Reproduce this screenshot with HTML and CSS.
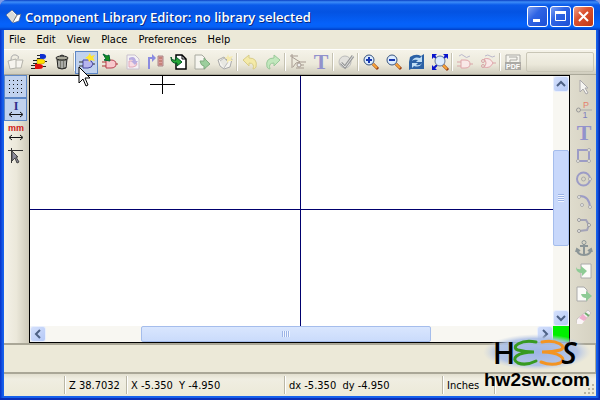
FILE: index.html
```html
<!DOCTYPE html>
<html lang="en">
<head>
  <meta charset="UTF-8">
  <meta name="viewport" content="width=device-width, initial-scale=1.0">
  <title>Component Library Editor</title>
  <link rel="stylesheet" href="styles.css">
</head>
<body>
  <div class="window">
    <header class="titlebar">
      <svg class="app-icon" width="16" height="16" viewBox="0 0 16 16"><path d="M0 6 6 1l5 5 4-1-2 7-6 2z" fill="#fff" stroke="#4a5a80" stroke-width=".7"/><path d="M1 6 6 2l5 6-5 5z" fill="#dcdcd8"/><path d="m7 13 4-7" stroke="#777"/></svg>
      <h1>Component Library Editor: no library selected</h1>
      <div class="win-buttons">
        <button class="win-btn" aria-label="Minimize"><svg width="19" height="19"><path d="M5 13.5h7" stroke="#fff" stroke-width="3"/></svg></button>
        <button class="win-btn" aria-label="Maximize"><svg width="19" height="19"><path d="M4.500 5.500h10v8h-10z" fill="none" stroke="#fff"/><path d="M4 5.500h11" stroke="#fff" stroke-width="3"/></svg></button>
        <button class="win-btn close" aria-label="Close"><svg width="19" height="19"><path d="m5 5 9 9m0-9-9 9" stroke="#fff" stroke-width="2"/></svg></button>
      </div>
    </header>

    <nav class="menubar">
      <button>File</button>
      <button>Edit</button>
      <button>View</button>
      <button>Place</button>
      <button>Preferences</button>
      <button>Help</button>
    </nav>

    <div class="toolbar">
      <button class="tool" aria-label="Save library" disabled><svg viewBox="0 0 16 16"><path d="M0 7 8 5v9l-6 1zM8 6h7l-2 8H8" fill="#f6f4ee" stroke="#b3b2aa"/><path d="M3 6q0-6 5-5 4 1 2 4" fill="none" stroke="#aaa"/></svg></button>
      <button class="tool" aria-label="Select library"><svg viewBox="0 0 16 16"><path d="M9 0h3q3 0 3 2.500T12 5H9z" fill="#1030d0"/><path d="M6 5h4q4 0 4 2.500T10 10H6z" fill="#ffe000" stroke="#aa8800" stroke-width=".5"/><path d="M4 10h4q4 0 4 2.500T8 15H4z" fill="#e01010"/><path d="M6 1.500h3M6 4.500h3M2 6.500h4M2 9.500h4M0 11.500h4M0 14.500h4M12 12.500h3M14 7.500h2" stroke="#222"/></svg></button>
      <button class="tool" aria-label="Delete component"><svg viewBox="0 0 16 16"><path d="M3 5h10l-1 9q-4 2-8 0z" fill="#77786e" stroke="#222"/><ellipse cx="8" cy="4" rx="6" ry="2" fill="#aaa99a" stroke="#222"/><path d="M6 2q2-2 4 0" fill="none" stroke="#222"/><path d="M5 7v6M8 7v7M11 7v6" stroke="#ddd"/></svg></button>
      <span class="sep"></span>
      <button class="tool active" aria-label="New component"><svg viewBox="0 0 16 16"><path d="M4 6h5q4 0 5 4-1 4-5 4H4z" fill="#b6b5ef" stroke="#4545a0"/><path d="M0 8h4M0 12h4M14 10h2" stroke="#333"/><path d="m11-1 1 3 4-1-2 3 2 3-4-1-2 2-1-3-3-1 3-2z" fill="#ffe52e"/></svg></button>
      <button class="tool" aria-label="Load component"><svg viewBox="0 0 16 16"><path d="M4 6h5q5 0 5 4t-5 4H4z" fill="#f8c8cc" stroke="#b84050"/><path d="M0 8h4M0 12h4M14 10h2" stroke="#a33"/><path d="m1 0 4 2 2-1 1 6-6-1 2-1z" fill="#159020" stroke="#063"/></svg></button>
      <button class="tool" aria-label="Component from current" disabled><svg viewBox="0 0 16 16"><path d="M2 1h8l4 4v10H2z" fill="#f4f2f4" stroke="#c9c0cd"/><path d="M4 7h4q4 1 4 3t-4 3H4z" fill="#f8dce4" stroke="#e0a8b8"/><path d="M4 4q6-3 7 3h2l-3 4-4-4h2q0-2-4-1z" fill="#b9ace0"/></svg></button>
      <button class="tool" aria-label="Update component" disabled><svg viewBox="0 0 16 16"><path d="M1 15V4h4" fill="none" stroke="#8b8ce0" stroke-width="2"/><path d="m4 0 4 4-4 4z" fill="#8b8ce0"/><path d="M10 2h5v10h-5z" fill="#e0a0a0" stroke="#a88"/><path d="M11 4h3m-3 3h3m-3 3h3" stroke="#a65"/></svg></button>
      <button class="tool" aria-label="Import component"><svg viewBox="0 0 16 16"><path d="M5 1h6l4 4v10H5z" fill="#fff" stroke="#000" stroke-width="1.500"/><path d="M11 1v4h4" fill="none" stroke="#000"/><path d="M0 3q1 4 5 3V3l6 5-5 4v-3Q0 10 0 3z" fill="#28a838" stroke="#052"/></svg></button>
      <button class="tool" aria-label="Export component" disabled><svg viewBox="0 0 16 16"><path d="M1 1h7l3 3v11H1z" fill="#f6f5ef" stroke="#a8aaa0"/><path d="M6 7h4V4l6 6-6 5v-3Q7 12 6 7z" fill="#9cce9d" stroke="#80ab80"/></svg></button>
      <button class="tool" aria-label="New library" disabled><svg viewBox="0 0 16 16"><path d="m1 6 6-3 3 3 5-1-2 8-6 2-4-3z" fill="#f5f4ef" stroke="#aaa"/><path d="M3 7 7 4l4 4-4 6" fill="#e8e8e2" stroke="#bbb"/><path d="m11 0 1 3 4-1-2 3 2 2-4 0-2 2V5L7 4l3-1z" fill="#f5eab0"/></svg></button>
      <span class="sep"></span>
      <button class="tool" aria-label="Undo" disabled><svg viewBox="0 0 16 16"><path d="m1 6 6-5v3q9 0 7 9-1 2-3 2 2-6-4-6v3z" fill="#f4eaa8" stroke="#d8cc88"/></svg></button>
      <button class="tool" aria-label="Redo" disabled><svg viewBox="0 0 16 16"><path d="M15 6 9 1v3Q0 4 2 13q1 2 3 2-2-6 4-6v3z" fill="#c2e8bd" stroke="#9ac99a"/></svg></button>
      <span class="sep"></span>
      <button class="tool" aria-label="Edit properties" disabled><svg viewBox="0 0 16 16"><path d="M0 2h8M2 0v14M2 3l8 5-4 1-3 4" fill="none" stroke="#a79b91"/><path d="M9 8h7M9 11h5M6 14h8" stroke="#a79b91"/><circle cx="9" cy="11" r="2" fill="#eee" stroke="#a79b91"/></svg></button>
      <button class="tool" aria-label="Text" disabled><svg viewBox="0 0 16 16"><text x="8" y="15" class="icon-t">T</text></svg></button>
      <span class="sep"></span>
      <button class="tool" aria-label="Check pins" disabled><svg viewBox="0 0 16 16"><circle cx="7" cy="8" r="6" fill="#e2e1dd" stroke="#bbb"/><path d="m3 9 4 4 8-11" fill="none" stroke="#999a9a" stroke-width="3"/><path d="m3 9 4 4 8-11" fill="none" stroke="#ddd"/></svg></button>
      <span class="sep"></span>
      <button class="tool" aria-label="Zoom in"><svg viewBox="0 0 16 16"><path d="m10 10 5 5" stroke="#963c14" stroke-width="3"/><path d="m10 10 4 4" stroke="#f8a638" stroke-width="2"/><circle cx="6" cy="6" r="5" fill="#dcecff" stroke="#39547c"/><path d="M3 6h6M6 3v6" stroke="#1838b0" stroke-width="2"/></svg></button>
      <button class="tool" aria-label="Zoom out"><svg viewBox="0 0 16 16"><path d="m10 10 5 5" stroke="#963c14" stroke-width="3"/><path d="m10 10 4 4" stroke="#f8a638" stroke-width="2"/><circle cx="6" cy="6" r="5" fill="#dcecff" stroke="#39547c"/><path d="M3 6h6" stroke="#1838b0" stroke-width="2"/></svg></button>
      <button class="tool" aria-label="Redraw"><svg viewBox="0 0 16 16"><path d="M1 3q6-4 11-1l3-2v15H2L0 16V8z" fill="#2b61a5"/><path d="M3 7q2-5 8-3l2-2v6H7l2-2Q5 5 3 7zM13 9q-2 5-8 3l-2 2V9h6l-2 2q4 1 6-2z" fill="#c0def5"/></svg></button>
      <button class="tool" aria-label="Zoom auto"><svg viewBox="0 0 16 16"><path d="M0 0h5L0 5zM16 0h-5l5 5zM0 16h5l-5-5z" fill="#0b16cc"/><path d="m1 1 4 4m10-4-4 4M1 15l4-4" stroke="#0b16cc" stroke-width="2"/><path d="m11 11 5 5" stroke="#963c14" stroke-width="3"/><path d="m11 11 4 4" stroke="#f8a638" stroke-width="2"/><circle cx="8" cy="7" r="5" fill="#dcecff" stroke="#65799a"/></svg></button>
      <span class="sep"></span>
      <button class="tool" aria-label="Normal body style" disabled><svg viewBox="0 0 16 16"><path d="M4 6h4q5 0 5 4t-5 4H4z" fill="#f9e9e8" stroke="#e0a5aa"/><path d="M0 8h4M0 12h4M13 10h3" stroke="#d8a5a8"/><path d="M2 2q3-3 5 0t6 0" fill="none" stroke="#bbb8cc"/></svg></button>
      <button class="tool" aria-label="Alternate body style" disabled><svg viewBox="0 0 16 16"><path d="M4 5q6-2 9 4-3 6-9 4 4-4 0-8z" fill="#f9e9e8" stroke="#e0a5aa"/><circle cx="3" cy="7" r="1.500" fill="none" stroke="#d8a5a8"/><circle cx="3" cy="12" r="1.500" fill="none" stroke="#d8a5a8"/><path d="M13 9h3" stroke="#d8a5a8"/><path d="M5 2q3-2 5 0t5 0" fill="none" stroke="#bbb8cc"/></svg></button>
      <span class="sep"></span>
      <button class="tool" aria-label="Documentation" disabled><svg viewBox="0 0 16 16"><path d="M1 8V1h14v7" fill="#f5f4ee" stroke="#aaa9a4"/><path d="M4 3h8v3H5v2" fill="none" stroke="#aaa9a4"/><rect x="0" y="8" width="16" height="8" fill="#aaa9a4"/><text x="8" y="15" class="icon-pdf">PDF</text></svg></button>
      <span class="toolbar-end"></span>
    </div>

    <main class="workspace">
      <div class="side left">
        <button class="tool active" aria-label="Show grid"><svg viewBox="0 0 16 16"><path d="M1 1.500h14M1 5.500h14M1 9.500h14M1 13.500h14" stroke="#111" stroke-dasharray="1 3"/></svg></button>
        <button class="tool active" aria-label="Units in inches"><svg viewBox="0 0 16 16"><text x="8" y="8" class="icon-i">I</text><path d="M2 12.500h12M4 10l-3 2.500L4 15M12 10l3 2.500L12 15" fill="none" stroke="#111"/></svg></button>
        <button class="tool" aria-label="Units in millimeters"><svg viewBox="0 0 16 16"><text x="8" y="6" class="icon-mm">mm</text><path d="M2 12.500h12M4 10l-3 2.500L4 15M12 10l3 2.500L12 15" fill="none" stroke="#111"/></svg></button>
        <button class="tool" aria-label="Cursor shape"><svg viewBox="0 0 16 16"><path d="M0 2.500h15M3.500 0v15" stroke="#333"/><path d="m4 3 6 6H8l3 5-2 1-2-5-3 3z" fill="#8b8a99" stroke="#444"/></svg></button>
      </div>

      <div class="editor">
        <div class="canvas">
          <svg class="axes"><path d="M270.500 0v2000M0 133.500h2000" stroke="#00006e"/></svg>
          <svg class="crosshair" width="25" height="18"><path d="M0 8.500h25M12.500 0v18" stroke="#000"/></svg>
        </div>
        <div class="scroll vertical">
          <button class="scroll-btn" aria-label="Scroll up"><svg viewBox="0 0 10 10"><path d="m1 7 4-4 4 4"/></svg></button>
          <span class="track before"></span>
          <span class="thumb"></span>
          <span class="track after"></span>
          <button class="scroll-btn" aria-label="Scroll down"><svg viewBox="0 0 10 10"><path d="m1 3 4 4 4-4"/></svg></button>
        </div>
        <div class="scroll horizontal">
          <button class="scroll-btn" aria-label="Scroll left"><svg viewBox="0 0 10 10"><path d="M7 1 3 5l4 4"/></svg></button>
          <span class="track before"></span>
          <span class="thumb"></span>
          <span class="track after"></span>
          <button class="scroll-btn" aria-label="Scroll right"><svg viewBox="0 0 10 10"><path d="m3 1 4 4-4 4"/></svg></button>
        </div>
        <div class="corner"></div>
      </div>

      <div class="side right">
        <button class="tool" aria-label="Select" disabled><svg viewBox="0 0 16 16"><path d="m4 1 8 8H9l3 5-2 1-3-5-3 3z" fill="#f6f5f1" stroke="#aaa8aa"/></svg></button>
        <button class="tool" aria-label="Add pin" disabled><svg viewBox="0 0 16 16"><circle cx="2.500" cy="8" r="2" fill="none" stroke="#999"/><path d="M5 8h11" stroke="#aaa"/><text x="10" y="6" class="icon-pin">P</text><text x="9" y="16" class="icon-pin blue">1</text></svg></button>
        <button class="tool" aria-label="Add text" disabled><svg viewBox="0 0 16 16"><text x="8" y="15" class="icon-t">T</text></svg></button>
        <button class="tool" aria-label="Add rectangle" disabled><svg viewBox="0 0 16 16"><path d="M2 2h11v11H2z" fill="none" stroke="#9c9cc6" stroke-width="2"/><circle cx="2" cy="13" r="1.500" fill="#eee" stroke="#aaa"/><circle cx="13" cy="2" r="1.500" fill="#eee" stroke="#aaa"/><circle cx="13" cy="13" r="1.500" fill="#eee" stroke="#aaa"/></svg></button>
        <button class="tool" aria-label="Add circle" disabled><svg viewBox="0 0 16 16"><circle cx="7.500" cy="8" r="6.500" fill="none" stroke="#9c9cc6" stroke-width="2"/><circle cx="7.500" cy="8" r="2" fill="none" stroke="#aaa"/><circle cx="14" cy="8" r="1.500" fill="#eee" stroke="#aaa"/></svg></button>
        <button class="tool" aria-label="Add arc" disabled><svg viewBox="0 0 16 16"><path d="M4 2q9 0 10 11" fill="none" stroke="#9c9cc6" stroke-width="2"/><circle cx="3" cy="3" r="1.500" fill="#eee" stroke="#aaa"/><circle cx="6" cy="11" r="1.500" fill="#eee" stroke="#aaa"/><circle cx="14" cy="13" r="1.500" fill="#eee" stroke="#aaa"/></svg></button>
        <button class="tool" aria-label="Add polygon" disabled><svg viewBox="0 0 16 16"><path d="m3 3 7 0 3 5-2 5-8 1" fill="none" stroke="#a3a3b8" stroke-width="2"/><circle cx="3" cy="3" r="1.500" fill="#eee" stroke="#999"/><circle cx="13" cy="8" r="1.500" fill="#eee" stroke="#999"/><circle cx="3" cy="14" r="1.500" fill="#eee" stroke="#999"/></svg></button>
        <button class="tool" aria-label="Set anchor" disabled><svg viewBox="0 0 16 16"><circle cx="8" cy="2.500" r="2" fill="none" stroke="#8b9597"/><path d="M8 4v11M4 6h8M1 10q1 5 7 5t7-5M0 12l1-3 3 2m12 1-1-3-3 2" fill="none" stroke="#8b9597" stroke-width="2"/></svg></button>
        <button class="tool" aria-label="Import drawing" disabled><svg viewBox="0 0 16 16"><path d="M5 1h10v14H5z" fill="#fbfbf8" stroke="#aaa"/><path d="M0 4q1 3 5 2V3l6 5-5 5v-3Q0 10 0 4z" fill="#8ecb95"/></svg></button>
        <button class="tool" aria-label="Export drawing" disabled><svg viewBox="0 0 16 16"><path d="M1 1h7l3 3v11H1z" fill="#fbfbf8" stroke="#aaa"/><path d="M5 8h5V5l6 5-6 5v-3Q6 12 5 8z" fill="#8ecb95"/></svg></button>
        <button class="tool" aria-label="Delete item" disabled><svg viewBox="0 0 16 16"><path d="m1 10 11-9 3 3-9 10H1z" fill="#f4f0f0" stroke="#c8c3c0"/><path d="m5 7 4 4-3 4H1v-4z" fill="#fbf6f8"/><path d="m7 5 4 4-3 3-5-3z" fill="#efb0cc"/><path d="m9 4 4 3" stroke="#70ad70" stroke-width="2"/></svg></button>
      </div>
    </main>

    <div class="message-panel"></div>

    <footer class="statusbar">
      <span class="cell message"></span>
      <span class="cell zoom">Z 38.7032</span>
      <span class="cell position">X -5.350&nbsp; Y -4.950</span>
      <span class="cell delta">dx -5.350&nbsp; dy -4.950</span>
      <span class="cell units">Inches</span>
      <span class="cell last"></span>
      <svg class="grip" width="12" height="12"><path d="M8 1h2M4 5h2m2 0h2M0 9h2m2 0h2m2 0h2" stroke="#b8b4a2" stroke-width="2"/></svg>
    </footer>

    <svg class="pointer" width="13" height="21" viewBox="0 0 13 21"><path d="M1 1v16l4-4 3 7 2-1-3-7h5z" fill="#fff" stroke="#000"/></svg>

    <div class="brand">
      <svg class="brand-mark" width="108" height="36" viewBox="0 0 108 36">
        <defs>
          <radialGradient id="glow"><stop offset="0" stop-color="#9eb5e6"/><stop offset=".75" stop-color="#adc0e7" stop-opacity=".9"/><stop offset="1" stop-color="#cbd4e2" stop-opacity="0"/></radialGradient>
        </defs>
        <ellipse cx="54" cy="18" rx="54" ry="18" fill="url(#glow)"/>
        <text x="21" y="30" class="brand-letter">H</text>
        <g fill="none" stroke-width="3" stroke-linecap="round">
          <path d="M53 8C38 5 27 13 35 16Q42 18 51 18C34 18 27 25 35 29Q43 32 53 27" stroke="#379a20"/>
          <path d="M59 8C74 5 85 13 77 16Q70 18 59 18C76 18 85 25 77 29Q68 32 58 28" stroke="#f39422"/>
        </g>
        <text x="86" y="30" class="brand-letter slanted">S</text>
      </svg>
      <span class="brand-name">hw2sw.com</span>
    </div>
  </div>
</body>
</html>
```
FILE: styles.css
```css
* {
  box-sizing: border-box;
}
body {
  margin: 0;
  background-color: #7d9be8;
  font-family: "DejaVu Sans Condensed", "DejaVu Sans", sans-serif;
  font-size: 11px;
  color: #000;
}
button {
  margin: 0;
  padding: 0;
  border: none;
  background: none;
  font: inherit;
  color: inherit;
}
svg {
  display: block;
}
.window {
  position: relative;
  display: flex;
  flex-direction: column;
  height: 100vh;
  padding: 0 4px 4px;
  background: linear-gradient(to right, #0831c9, #1660ec 3px, #1660ec calc(100% - 3px), #001ea0);
  box-shadow: inset 0 -2px #0a2fb8;
  border-radius: 7px 7px 0 0;
  overflow: hidden;
}

/* title bar */
.titlebar {
  display: flex;
  align-items: center;
  flex: none;
  height: 30px;
  margin: 0 -4px;
  padding: 3px 6px 0;
  background: linear-gradient(#0a3fc4, #3d8df8 2px, #0a5bea 5px, #0453e2 12px, #0562fb 24px, #0561f5 27px, #003dc5);
}
.app-icon {
  margin-right: 3px;
}
.titlebar h1 {
  flex: 1;
  margin: 0;
  font-family: "Open Sans", sans-serif;
  font-size: 13px;
  font-weight: 600;
  color: #fff;
  text-shadow: 1px 1px #0a2a80;
  white-space: nowrap;
}
.win-buttons {
  display: flex;
  gap: 2px;
}
.win-btn {
  width: 21px;
  height: 21px;
  border: 1px solid #fff;
  border-radius: 3px;
  background: linear-gradient(135deg, #7da0f3, #2f64e4 40%, #1c50d6);
}
.win-btn.close {
  background: linear-gradient(135deg, #f0a088, #dc5231 40%, #bf3714);
}

/* menu */
.menubar {
  display: flex;
  gap: 11px;
  flex: none;
  height: 19px;
  padding-left: 5px;
  background-color: #ece9d8;
}
.menubar button {
  line-height: 18px;
}

/* tool bars */
.toolbar {
  display: flex;
  align-items: center;
  flex: none;
  height: 26px;
  border-top: 1px solid #fff;
  border-bottom: 1px solid #aaa899;
  background: linear-gradient(#f5f3e9, #ebe8da 60%, #cfccbd);
}
.tool {
  display: flex;
  align-items: center;
  justify-content: center;
  flex: none;
  width: 23px;
  height: 23px;
  border: 1px solid transparent;
}
.tool svg {
  width: 16px;
  height: 16px;
  overflow: visible;
}
.tool.active {
  border-color: #5c86c5;
  background-color: #c1d2ee;
}
.sep {
  width: 2px;
  height: 18px;
  border-left: 1px solid #c5c2b2;
  border-right: 1px solid #fff;
}
.toolbar-end {
  flex: 1;
  height: 20px;
  margin: 0 2px;
  border: 1px solid #c9c6b6;
  border-radius: 2px;
}
.icon-t,
.icon-i,
.icon-mm,
.icon-pin,
.icon-pdf {
  font-weight: bold;
  text-anchor: middle;
}
.icon-t {
  font-family: "Liberation Serif", serif;
  font-size: 22px;
  fill: #9292cc;
}
.icon-i {
  font-family: "Liberation Serif", serif;
  font-size: 12px;
  fill: #30308c;
}
.icon-mm {
  font-family: "Liberation Sans", sans-serif;
  font-size: 9px;
  fill: #d01818;
}
.icon-pin {
  font-family: "Liberation Sans", sans-serif;
  font-size: 9px;
  font-weight: normal;
  fill: #e4806c;
}
.icon-pin.blue {
  fill: #8080bf;
}
.icon-pdf {
  font-family: "Liberation Sans", sans-serif;
  font-size: 7px;
  fill: #fff;
}

/* drawing area */
.workspace {
  display: flex;
  flex: 1;
  min-height: 0;
  background-color: #d8d4c4;
}
.side {
  display: flex;
  flex-direction: column;
  flex: none;
  width: 25px;
  background: linear-gradient(to right, #f4f2e8, #ebe8da 50%, #cdc9b9);
}
.side.right {
  width: 26px;
  padding-left: 2px;
  background: linear-gradient(to right, #dfdccd, #d5d1c1);
}
.editor {
  display: grid;
  grid-template-columns: 1fr 16px;
  grid-template-rows: 1fr 16px;
  flex: 1;
  min-width: 0;
  border: 1px solid #000;
}
.canvas {
  position: relative;
  background-color: #fff;
  overflow: hidden;
}
.axes {
  width: 100%;
  height: 100%;
}
.crosshair {
  position: absolute;
  left: 120px;
  top: 0;
}
.scroll {
  display: flex;
  min-width: 0;
  min-height: 0;
  background-color: #f8f7f2;
}
.vertical {
  flex-direction: column;
}
.scroll-btn {
  display: flex;
  align-items: center;
  justify-content: center;
  flex: none;
  width: 16px;
  height: 16px;
  border: 1px solid #e9effd;
  border-radius: 3px;
  background: linear-gradient(135deg, #d4e0fc, #b4c8f6);
}
.scroll-btn svg {
  width: 10px;
  height: 10px;
  fill: none;
  stroke: #4d6185;
  stroke-width: 2px;
}
.thumb {
  display: flex;
  align-items: center;
  justify-content: center;
  border: 1px solid #a5bdec;
  border-radius: 2px;
  background-color: #c8d8fb;
}
.horizontal .thumb {
  flex: 290;
  background: linear-gradient(#d9e6fe, #cadbfb);
}
.horizontal .before {
  flex: 95;
}
.horizontal .after {
  flex: 106;
}
.vertical .thumb {
  flex: 94;
}
.vertical .before {
  flex: 59;
}
.vertical .after {
  flex: 65;
}
.thumb::before {
  content: "";
  width: 8px;
  height: 6px;
  background: repeating-linear-gradient(to right, #9bb3e6 0 1px, #f0f5ff 1px 2px);
}
.vertical .thumb::before {
  width: 6px;
  height: 8px;
  background: repeating-linear-gradient(#9bb3e6 0 1px, #f0f5ff 1px 2px);
}
.corner {
  background-color: #00f000;
}

/* bottom panels */
.message-panel {
  flex: none;
  height: 31px;
  border: 1px solid #aaa797;
  border-width: 2px 1px 2px 0;
  background-color: #ece9d8;
}
.statusbar {
  display: flex;
  align-items: center;
  flex: none;
  height: 22px;
  background: linear-gradient(#e2dfcf, #f0eee2 5px, #ece9d8);
}
.cell {
  min-width: 0;
  height: 18px;
  padding-left: 4px;
  border-left: 1px solid #bab7a6;
  box-shadow: inset 1px 0 #fff;
  line-height: 20px;
  white-space: nowrap;
}
.cell.message {
  flex: 60 1 60px;
  border: none;
  box-shadow: none;
}
.cell.zoom {
  flex: 62 1 62px;
}
.cell.position,
.cell.delta {
  flex: 158 1 158px;
}
.cell.units {
  flex: 52 1 52px;
}
.cell.last {
  flex: 90 1 90px;
}
.grip {
  align-self: flex-end;
}

/* overlays */
.pointer {
  position: absolute;
  left: 78px;
  top: 66px;
}
.brand {
  position: absolute;
  right: 9px;
  bottom: 10px;
  display: flex;
  flex-direction: column;
  align-items: center;
}
.brand-mark {
  overflow: visible;
}
.brand-letter {
  font-family: "Open Sans", sans-serif;
  font-size: 30px;
  font-weight: 600;
  text-anchor: middle;
  fill: #000;
}
.brand-letter.slanted {
  font-style: italic;
}
.brand-name {
  font-family: "Liberation Sans", Arial, sans-serif;
  font-size: 19px;
  font-weight: bold;
  line-height: 20px;
}
```
